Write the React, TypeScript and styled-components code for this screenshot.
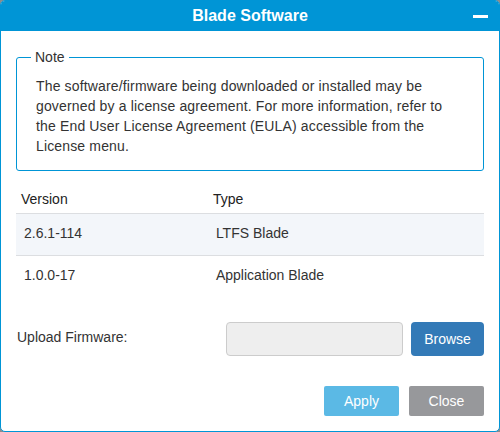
import styled, { createGlobalStyle } from "styled-components";

const GlobalStyle = createGlobalStyle`
  html, body {
    margin: 0;
    padding: 0;
    background: #8c8c8c;
  }
  body {
    font-family: "Liberation Sans", Arial, sans-serif;
    font-size: 14px;
    color: #333;
  }
`;

const blades = [
  { version: "2.6.1-114", type: "LTFS Blade" },
  { version: "1.0.0-17", type: "Application Blade" },
];

function App() {
  return (
    <>
      <GlobalStyle />
      <Dialog>
        <Header>
          <span />
          <Title>Blade Software</Title>
          <MinimizeButton aria-label="Minimize">
            <MinusBar />
          </MinimizeButton>
        </Header>

        <Body>
          <Note>
            <Legend>Note</Legend>
            The software/firmware being downloaded or installed may be
            governed by a license agreement. For more information, refer to
            the End User License Agreement (EULA) accessible from the License
            menu.
          </Note>

          <Table>
            <thead>
              <tr>
                <HeadCell style={{ width: "41%" }}>Version</HeadCell>
                <HeadCell>Type</HeadCell>
              </tr>
            </thead>
            <tbody>
              {blades.map((blade, index) => (
                <Row key={blade.version} striped={index % 2 === 0}>
                  <Cell>{blade.version}</Cell>
                  <Cell>{blade.type}</Cell>
                </Row>
              ))}
            </tbody>
          </Table>

          <UploadRow>
            <UploadLabel>Upload Firmware:</UploadLabel>
            <FileInput readOnly value="" />
            <Button variant="primary">Browse</Button>
          </UploadRow>

          <Footer>
            <Button variant="info">Apply</Button>
            <Button variant="muted">Close</Button>
          </Footer>
        </Body>
      </Dialog>
    </>
  );
}

export default App;

const buttonColors: Record<string, string> = {
  primary: "#337ab7",
  info: "#5bb9e5",
  muted: "#97989b",
};

const Dialog = styled.div`
  box-sizing: border-box;
  width: 500px;
  height: 432px;
  background: #fff;
  border: 1px solid #0095d6;
  border-radius: 5px;
  overflow: hidden;
  display: flex;
  flex-direction: column;
`;

const Header = styled.div`
  height: 30px;
  background: #0095d6;
  display: grid;
  grid-template-columns: 1fr auto 1fr;
  align-items: center;
`;

const Title = styled.h1`
  margin: 0;
  font-size: 16px;
  font-weight: bold;
  color: #fff;
  line-height: 30px;
`;

const MinimizeButton = styled.button`
  justify-self: end;
  margin-right: 11px;
  padding: 0;
  border: none;
  background: transparent;
  width: 15px;
  height: 30px;
  display: flex;
  align-items: center;
`;

const MinusBar = styled.span`
  display: block;
  width: 15px;
  height: 3px;
  margin-top: 1px;
  background: #fff;
`;

const Body = styled.div`
  flex: 1;
  padding: 0 15px;
  display: flex;
  flex-direction: column;
`;

const Note = styled.fieldset`
  margin: 16px 0 0;
  padding: 9px 19px 14px;
  border: 1px solid #0095d6;
  border-radius: 3px;
  line-height: 20px;
  letter-spacing: 0.15px;
  color: #333;
`;

const Legend = styled.legend`
  margin-left: -5px;
  padding: 0 4px;
  line-height: 20px;
  letter-spacing: 0;
  color: #333;
`;

const Table = styled.table`
  margin-top: 18px;
  width: 100%;
  border-collapse: collapse;
`;

const HeadCell = styled.th`
  text-align: left;
  font-weight: normal;
  color: #222;
  padding: 0 5px 4px;
  line-height: 20px;
  border-bottom: 1px solid #dcdee1;
`;

const Row = styled.tr<{ striped?: boolean }>`
  background: ${(props) => (props.striped ? "#f3f6fa" : "#fff")};
  border-bottom: 1px solid #dcdee1;

  &:last-child {
    border-bottom: none;
  }
`;

const Cell = styled.td`
  padding: 0 8px 3px;
  height: 38px;
  line-height: 20px;
  color: #333;
`;

const UploadRow = styled.div`
  margin-top: 25px;
  display: flex;
  align-items: center;
  gap: 8px;
`;

const UploadLabel = styled.label`
  flex: 1;
  padding-left: 1px;
  margin-top: -4px;
`;

const FileInput = styled.input`
  box-sizing: border-box;
  width: 177px;
  height: 34px;
  background: #eee;
  border: 1px solid #ccc;
  border-radius: 4px;
`;

const Button = styled.button<{ variant: string }>`
  box-sizing: border-box;
  height: ${(props) => (props.variant === "primary" ? "34px" : "30px")};
  width: ${(props) => (props.variant === "primary" ? "73px" : "75px")};
  border: none;
  border-radius: ${(props) => (props.variant === "primary" ? "4px" : "2px")};
  background: ${(props) => buttonColors[props.variant]};
  color: #fff;
  font-family: "Liberation Sans", Arial, sans-serif;
  font-size: 14px;
  padding: 0;
`;

const Footer = styled.div`
  margin-top: 30px;
  display: flex;
  justify-content: flex-end;
  gap: 10px;
`;
